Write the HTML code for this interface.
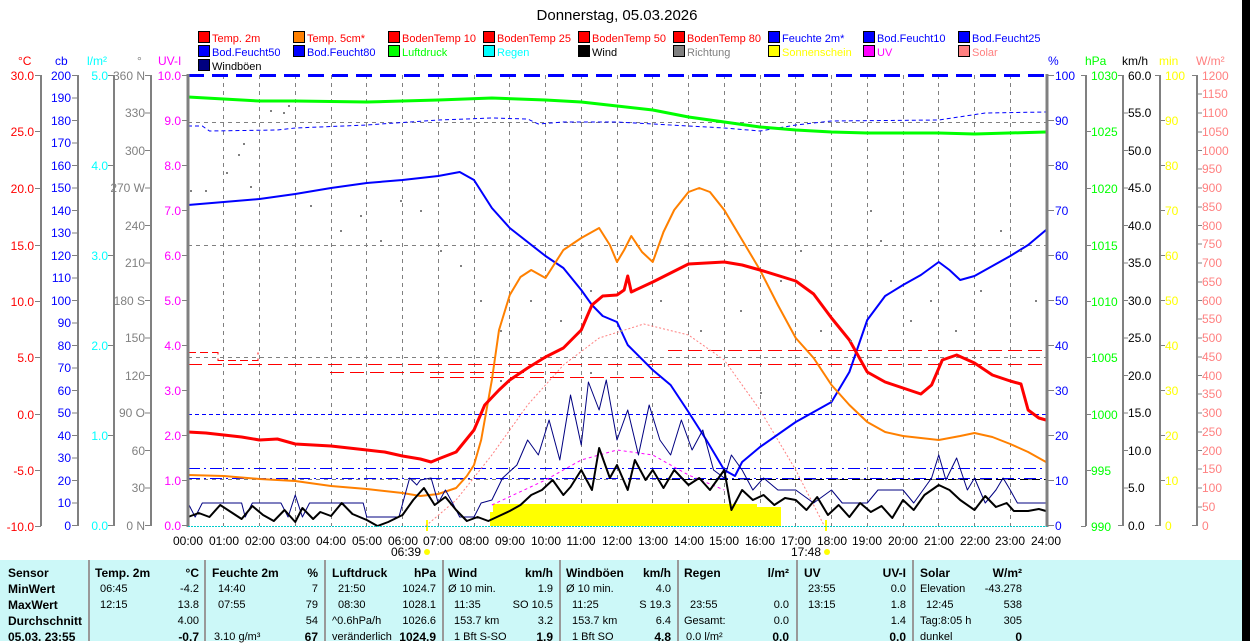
<!DOCTYPE html>
<html><head><meta charset="utf-8">
<style>
html,body{margin:0;padding:0;background:#fff;}
body{width:1250px;height:641px;position:relative;overflow:hidden;font-family:"Liberation Sans",sans-serif;}
svg{position:absolute;left:0;top:0;}
svg text{font-family:"Liberation Sans",sans-serif;font-size:12px;}
svg .lg text{font-size:11px;}
.tb{position:absolute;left:0;top:560px;width:1242px;height:81px;background:#ccf8f8;}
.c{position:absolute;font-size:11px;white-space:nowrap;color:#000;}
.b{font-weight:bold;font-size:12px;}
.r{text-align:right;}
.sep{position:absolute;top:560px;width:2px;height:81px;background:#999;}
</style></head><body>
<div style="position:absolute;left:1242px;top:0;width:8px;height:641px;background:#000"></div>
<svg width="1250" height="641" viewBox="0 0 1250 641">
<text x="617" y="20" text-anchor="middle" style="font-size:15px">Donnerstag, 05.03.2026</text>
<!-- legend -->
<g stroke="#000" stroke-width="1">
<rect x="198.5" y="31.5" width="11" height="11" fill="#f00"/><rect x="293.5" y="31.5" width="11" height="11" fill="#ff8000"/><rect x="388.5" y="31.5" width="11" height="11" fill="#f00"/><rect x="483.5" y="31.5" width="11" height="11" fill="#f00"/><rect x="578.5" y="31.5" width="11" height="11" fill="#f00"/><rect x="673.5" y="31.5" width="11" height="11" fill="#f00"/><rect x="768.5" y="31.5" width="11" height="11" fill="#00f"/><rect x="863.5" y="31.5" width="11" height="11" fill="#00f"/><rect x="958.5" y="31.5" width="11" height="11" fill="#00f"/>
<rect x="198.5" y="45.5" width="11" height="11" fill="#00f"/><rect x="293.5" y="45.5" width="11" height="11" fill="#00f"/><rect x="388.5" y="45.5" width="11" height="11" fill="#0f0"/><rect x="483.5" y="45.5" width="11" height="11" fill="#0ff"/><rect x="578.5" y="45.5" width="11" height="11" fill="#000"/><rect x="673.5" y="45.5" width="11" height="11" fill="#808080"/><rect x="768.5" y="45.5" width="11" height="11" fill="#ff0"/><rect x="863.5" y="45.5" width="11" height="11" fill="#f0f"/><rect x="958.5" y="45.5" width="11" height="11" fill="#ff8080"/>
<rect x="198.5" y="59.5" width="11" height="11" fill="#000080"/>
</g>
<g class="lg">
<text x="212" y="42" fill="#f00">Temp. 2m</text><text x="307" y="42" fill="#f00">Temp. 5cm*</text><text x="402" y="42" fill="#f00">BodenTemp 10</text><text x="497" y="42" fill="#f00">BodenTemp 25</text><text x="592" y="42" fill="#f00">BodenTemp 50</text><text x="687" y="42" fill="#f00">BodenTemp 80</text><text x="782" y="42" fill="#00f">Feuchte 2m*</text><text x="877" y="42" fill="#00f">Bod.Feucht10</text><text x="972" y="42" fill="#00f">Bod.Feucht25</text>
<text x="212" y="56" fill="#00f">Bod.Feucht50</text><text x="307" y="56" fill="#00f">Bod.Feucht80</text><text x="402" y="56" fill="#0f0">Luftdruck</text><text x="497" y="56" fill="#0ff">Regen</text><text x="592" y="56" fill="#000">Wind</text><text x="687" y="56" fill="#808080">Richtung</text><text x="782" y="56" fill="#ff0">Sonnenschein</text><text x="877" y="56" fill="#f0f">UV</text><text x="972" y="56" fill="#ff8080">Solar</text>
<text x="212" y="70" fill="#000">Windböen</text>
</g>
<!-- axis titles -->
<text x="18" y="65" fill="#f00">°C</text><text x="55" y="65" fill="#00f">cb</text><text x="87" y="65" fill="#0ff">l/m²</text><text x="137" y="65" fill="#808080">°</text><text x="158" y="65" fill="#f0f">UV-I</text>
<text x="1048" y="65" fill="#00f">%</text><text x="1085" y="65" fill="#0f0">hPa</text><text x="1122" y="65" fill="#000">km/h</text><text x="1159" y="65" fill="#ff0">min</text><text x="1196" y="65" fill="#ff8080">W/m²</text>
<!-- left axis lines -->
<g stroke="#808080" stroke-width="2">
<line x1="41" y1="75" x2="41" y2="526"/><line x1="78" y1="75" x2="78" y2="526"/><line x1="114" y1="75" x2="114" y2="526"/><line x1="151" y1="75" x2="151" y2="526"/>
<line x1="1086" y1="75" x2="1086" y2="526"/><line x1="1123" y1="75" x2="1123" y2="526"/><line x1="1160" y1="75" x2="1160" y2="526"/><line x1="1197" y1="75" x2="1197" y2="526"/>
</g>
<g stroke="#808080" stroke-width="1">
<path d="M35 75.5h6M35 131.5h6M35 188.5h6M35 245.5h6M35 301.5h6M35 357.5h6M35 414.5h6M35 470.5h6M35 526.5h6"/>
<path d="M72 75.5h6M72 98h6M72 120.5h6M72 143h6M72 165.5h6M72 188h6M72 210.5h6M72 233h6M72 255.5h6M72 278h6M72 300.5h6M72 323h6M72 345.5h6M72 368h6M72 390.5h6M72 413h6M72 435.5h6M72 458h6M72 480.5h6M72 503h6M72 525.5h6"/>
<path d="M108 75.5h6M108 165.5h6M108 255.5h6M108 345.5h6M108 435.5h6M108 525.5h6"/>
<path d="M145 75.5h6M145 113h6M145 150.5h6M145 188h6M145 225.5h6M145 263h6M145 300.5h6M145 338h6M145 375.5h6M145 413h6M145 450.5h6M145 488h6M145 525.5h6"/>
<path d="M182 75.5h6M182 120.5h6M182 165.5h6M182 210.5h6M182 255.5h6M182 300.5h6M182 345.5h6M182 390.5h6M182 435.5h6M182 480.5h6M182 525.5h6"/>
<path d="M1048 75.5h6M1048 120.5h6M1048 165.5h6M1048 210.5h6M1048 255.5h6M1048 300.5h6M1048 345.5h6M1048 390.5h6M1048 435.5h6M1048 480.5h6M1048 525.5h6"/>
<path d="M1081 75.5h5M1086 131.5h5M1086 188.5h5M1086 245.5h5M1086 301.5h5M1086 357.5h5M1086 414.5h5M1086 470.5h5M1081 526.5h5"/>
<path d="M1118 75.5h5M1123 113h5M1123 150.5h5M1123 188h5M1123 225.5h5M1123 263h5M1123 300.5h5M1123 338h5M1123 375.5h5M1123 413h5M1123 450.5h5M1123 488h5M1118 525.5h5"/>
<path d="M1155 75.5h5M1160 120.5h5M1160 165.5h5M1160 210.5h5M1160 255.5h5M1160 300.5h5M1160 345.5h5M1160 390.5h5M1160 435.5h5M1160 480.5h5M1155 525.5h5"/>
<path d="M1192 75.5h5M1197 94h5M1197 113h5M1197 132h5M1197 150.5h5M1197 169h5M1197 188h5M1197 207h5M1197 225.5h5M1197 244h5M1197 263h5M1197 282h5M1197 300.5h5M1197 319h5M1197 338h5M1197 357h5M1197 375.5h5M1197 394h5M1197 413h5M1197 432h5M1197 450.5h5M1197 469h5M1197 488h5M1197 507h5M1192 525.5h5"/>
</g>
<!-- left labels -->
<g fill="#f00" text-anchor="end"><text x="34" y="80">30.0</text><text x="34" y="136">25.0</text><text x="34" y="193">20.0</text><text x="34" y="250">15.0</text><text x="34" y="306">10.0</text><text x="34" y="362">5.0</text><text x="34" y="419">0.0</text><text x="34" y="475">-5.0</text><text x="34" y="531">-10.0</text></g>
<g fill="#00f" text-anchor="end"><text x="71" y="80">200</text><text x="71" y="102">190</text><text x="71" y="125">180</text><text x="71" y="147">170</text><text x="71" y="170">160</text><text x="71" y="192">150</text><text x="71" y="215">140</text><text x="71" y="237">130</text><text x="71" y="260">120</text><text x="71" y="282">110</text><text x="71" y="305">100</text><text x="71" y="327">90</text><text x="71" y="350">80</text><text x="71" y="372">70</text><text x="71" y="395">60</text><text x="71" y="417">50</text><text x="71" y="440">40</text><text x="71" y="462">30</text><text x="71" y="485">20</text><text x="71" y="507">10</text><text x="71" y="530">0</text></g>
<g fill="#0ff" text-anchor="end"><text x="108" y="80">5.0</text><text x="108" y="170">4.0</text><text x="108" y="260">3.0</text><text x="108" y="350">2.0</text><text x="108" y="440">1.0</text><text x="108" y="530">0.0</text></g>
<g fill="#808080" text-anchor="end"><text x="145" y="80">360 N</text><text x="145" y="117">330</text><text x="145" y="155">300</text><text x="145" y="192">270 W</text><text x="145" y="230">240</text><text x="145" y="267">210</text><text x="145" y="305">180 S</text><text x="145" y="342">150</text><text x="145" y="380">120</text><text x="145" y="417">90 O</text><text x="145" y="455">60</text><text x="145" y="492">30</text><text x="145" y="530">0 N</text></g>
<g fill="#f0f" text-anchor="end"><text x="181" y="80">10.0</text><text x="181" y="125">9.0</text><text x="181" y="170">8.0</text><text x="181" y="215">7.0</text><text x="181" y="260">6.0</text><text x="181" y="305">5.0</text><text x="181" y="350">4.0</text><text x="181" y="395">3.0</text><text x="181" y="440">2.0</text><text x="181" y="485">1.0</text><text x="181" y="530">0.0</text></g>
<!-- right labels -->
<g fill="#00f"><text x="1055" y="80">100</text><text x="1055" y="125">90</text><text x="1055" y="170">80</text><text x="1055" y="215">70</text><text x="1055" y="260">60</text><text x="1055" y="305">50</text><text x="1055" y="350">40</text><text x="1055" y="395">30</text><text x="1055" y="440">20</text><text x="1055" y="485">10</text><text x="1055" y="530">0</text></g>
<g fill="#0f0"><text x="1091" y="80">1030</text><text x="1091" y="136">1025</text><text x="1091" y="193">1020</text><text x="1091" y="250">1015</text><text x="1091" y="306">1010</text><text x="1091" y="362">1005</text><text x="1091" y="419">1000</text><text x="1091" y="475">995</text><text x="1091" y="531">990</text></g>
<g fill="#000"><text x="1128" y="80">60.0</text><text x="1128" y="117">55.0</text><text x="1128" y="155">50.0</text><text x="1128" y="192">45.0</text><text x="1128" y="230">40.0</text><text x="1128" y="267">35.0</text><text x="1128" y="305">30.0</text><text x="1128" y="342">25.0</text><text x="1128" y="380">20.0</text><text x="1128" y="417">15.0</text><text x="1128" y="455">10.0</text><text x="1128" y="492">5.0</text><text x="1128" y="530">0.0</text></g>
<g fill="#ff0"><text x="1165" y="80">100</text><text x="1165" y="125">90</text><text x="1165" y="170">80</text><text x="1165" y="215">70</text><text x="1165" y="260">60</text><text x="1165" y="305">50</text><text x="1165" y="350">40</text><text x="1165" y="395">30</text><text x="1165" y="440">20</text><text x="1165" y="485">10</text><text x="1165" y="530">0</text></g>
<g fill="#ff8080"><text x="1202" y="80">1200</text><text x="1202" y="98">1150</text><text x="1202" y="117">1100</text><text x="1202" y="136">1050</text><text x="1202" y="155">1000</text><text x="1202" y="173">950</text><text x="1202" y="192">900</text><text x="1202" y="211">850</text><text x="1202" y="230">800</text><text x="1202" y="248">750</text><text x="1202" y="267">700</text><text x="1202" y="286">650</text><text x="1202" y="305">600</text><text x="1202" y="323">550</text><text x="1202" y="342">500</text><text x="1202" y="361">450</text><text x="1202" y="380">400</text><text x="1202" y="398">350</text><text x="1202" y="417">300</text><text x="1202" y="436">250</text><text x="1202" y="455">200</text><text x="1202" y="473">150</text><text x="1202" y="492">100</text><text x="1202" y="511">50</text><text x="1202" y="530">0</text></g>
<!-- grid -->
<g stroke="#808080" stroke-width="1" stroke-dasharray="4,4">
<path d="M223.5 75v451M259.5 75v451M295.5 75v451M331.5 75v451M366.5 75v451M402.5 75v451M438.5 75v451M474.5 75v451M509.5 75v451M545.5 75v451M581.5 75v451M617.5 75v451M652.5 75v451M688.5 75v451M724.5 75v451M760.5 75v451M795.5 75v451M831.5 75v451M867.5 75v451M903.5 75v451M938.5 75v451M974.5 75v451M1010.5 75v451"/>
<path d="M188 122.5h858M188 245.5h858M188 357.5h858M188 479.5h858"/>
</g>
<!-- x labels -->
<g fill="#000" text-anchor="middle">
<text x="188" y="545">00:00</text><text x="224" y="545">01:00</text><text x="260" y="545">02:00</text><text x="295" y="545">03:00</text><text x="331" y="545">04:00</text><text x="367" y="545">05:00</text><text x="403" y="545">06:00</text><text x="438" y="545">07:00</text><text x="474" y="545">08:00</text><text x="510" y="545">09:00</text><text x="546" y="545">10:00</text><text x="581" y="545">11:00</text><text x="617" y="545">12:00</text><text x="653" y="545">13:00</text><text x="689" y="545">14:00</text><text x="724" y="545">15:00</text><text x="760" y="545">16:00</text><text x="796" y="545">17:00</text><text x="832" y="545">18:00</text><text x="867" y="545">19:00</text><text x="903" y="545">20:00</text><text x="939" y="545">21:00</text><text x="975" y="545">22:00</text><text x="1010" y="545">23:00</text><text x="1046" y="545">24:00</text>
<text x="406" y="556">06:39</text><text x="806" y="556">17:48</text>
</g>
<circle cx="427" cy="552" r="3" fill="#ff0"/><circle cx="827" cy="552" r="3" fill="#ff0"/>
<line x1="427" y1="520" x2="427" y2="531" stroke="#ff0" stroke-width="2"/><line x1="826" y1="520" x2="826" y2="531" stroke="#ff0" stroke-width="2"/>
<!-- sunshine -->
<rect x="493" y="504" width="264" height="22" fill="#ff0"/><rect x="757" y="507" width="24" height="19" fill="#ff0"/><rect x="490" y="512" width="4" height="14" fill="#ff0"/>
<!-- dashed reference lines -->
<g fill="none" stroke-width="1">
<path d="M188 75.5h858" stroke="#00f" stroke-width="3" stroke-dasharray="16,8"/>
<path d="M188 414.5h858" stroke="#00f" stroke-dasharray="4,3"/>
<path d="M188 468.5h858" stroke="#00f" stroke-dasharray="12,4,2,4"/>
<path d="M188 478.5h858" stroke="#00f" stroke-dasharray="12,4,2,4"/>
<path d="M188 364.5h858" stroke="#f00" stroke-dasharray="14,6"/>
<path d="M188 352.5h30v8h40v-8" stroke="#f00" stroke-dasharray="8,4"/>
<path d="M430 377.5h230" stroke="#f00" stroke-dasharray="14,6"/>
<path d="M668 350.5h378" stroke="#f00" stroke-dasharray="14,6"/>
<path d="M330 372.5h240" stroke="#f00" stroke-dasharray="14,6"/>
<path d="M660 479.5h386" stroke="#000" stroke-dasharray="8,4"/>
</g>
<!-- curves in hour units -->
<g transform="translate(188,0) scale(35.75,1)" fill="none" stroke-linejoin="round">
<polyline vector-effect="non-scaling-stroke" stroke="#ff8080" stroke-width="1" stroke-dasharray="2,2" points="6.65,526 7.5,500 8.5,455 9.5,405 10.5,365 11.5,338 12.75,324 14,335 15,360 16,410 17,470 17.8,526"/>
<polyline vector-effect="non-scaling-stroke" stroke="#f0f" stroke-width="1" stroke-dasharray="3,3" points="8.5,505 10,480 11,460 12,450 13,455 14,475 15,490"/>
<polyline vector-effect="non-scaling-stroke" stroke="#00f" stroke-width="1" stroke-dasharray="4,3" points="0,126 0.4,126 0.6,131 2.5,130 3,128 5,125 7,120 8.5,118 9.5,119 9.8,124 10.5,122 12,122 14,126 15,128 16,131 17,125 18,121 21,120 22.3,113 24,112"/>
<polyline vector-effect="non-scaling-stroke" stroke="#0f0" stroke-width="3" points="0,97 1,99 2,101 3,101 5,102 6,101 7,100 8.5,98 10,100 11,102 12,106 13,110 14,117 15,122 16,127 17,130 18,132 19,133 21,133 22,134 24,132"/>
<polyline vector-effect="non-scaling-stroke" stroke="#00f" stroke-width="2" points="0,205 1,202 2,199 3,194 4,188 5,183 6,180 7,176 7.6,172 8,180 8.5,208 9,228 10,256 10.5,268 11,290 11.3,305 11.6,316 12,322 12.3,345 13,370 13.5,385 14,412 14.5,440 15,470 15.3,476 15.5,462 16,447 17,422 18,402 18.5,372 19,320 19.5,296 20,285 20.5,275 21,262 21.3,270 21.6,280 22,276 23,256 23.5,245 24,230"/>
<polyline vector-effect="non-scaling-stroke" stroke="#ff8000" stroke-width="2" points="0,475 1,476 2,479 3,481 4,486 5,489 6,493 6.5,496 7,494 7.5,488 7.8,476 8,465 8.2,440 8.5,380 8.7,330 9,295 9.3,277 9.6,270 10,278 10.5,250 11,238 11.5,228 11.8,245 12,262 12.2,250 12.4,236 12.7,252 13,262 13.3,232 13.6,210 14,192 14.3,188 14.6,192 15,210 15.5,240 16,270 16.5,305 17,338 17.5,358 18,385 18.5,405 19,422 19.5,432 20,436 21,440 21.6,436 22,433 22.5,437 23,444 23.5,452 24,462"/>
<polyline vector-effect="non-scaling-stroke" stroke="#f00" stroke-width="3" points="0,432 0.5,433 1,435 1.5,437 2,440 2.5,439 3,444 3.5,445 4,446 4.5,448 5,450 5.5,452 6,456 6.5,459 6.8,462 7,459 7.5,452 8,430 8.3,405 8.7,390 9,380 9.5,368 10,357 10.5,348 11,330 11.3,305 11.6,296 12,295 12.2,290 12.3,276 12.4,292 13,282 13.5,273 14,264 15,262 15.5,265 16,270 17,281 17.5,294 18,318 18.5,340 19,372 19.5,382 20,388 20.5,394 20.8,385 21.1,360 21.5,355 22,363 22.5,375 23,381 23.3,384 23.5,410 23.8,418 24,420"/>
<polyline vector-effect="non-scaling-stroke" stroke="#000080" stroke-width="1" points="0,503 0.2,517 0.4,503 1.5,503 1.6,517 1.8,503 2.6,503 2.8,517 3.0,495 3.2,517 3.4,503 4.9,503 5.0,517 5.9,517 6.2,478 6.4,485 6.5,480 6.8,478 7,503 7.2,490 7.4,503 7.6,517 8,517 8.2,503 8.5,500 8.8,478 9.2,465 9.5,440 9.8,455 10.1,420 10.4,460 10.7,395 11.0,445 11.2,382 11.5,410 11.7,380 12.0,440 12.3,410 12.6,455 12.9,405 13.2,440 13.5,455 13.8,420 14.1,450 14.4,430 14.7,470 15,478 15.2,455 15.5,470 15.8,490 16.1,478 16.5,490 17,490 17.5,503 18,490 18.3,503 19,503 19.3,490 20,490 20.3,503 20.8,478 21.0,455 21.2,480 21.5,458 21.8,490 22.0,478 22.3,503 22.6,490 22.8,478 23.0,490 23.2,503 24,503 24,480"/>
<polyline vector-effect="non-scaling-stroke" stroke="#000" stroke-width="2" points="0,517 0.3,513 0.6,517 0.9,505 1.2,512 1.5,519 1.8,506 2.1,515 2.4,521 2.7,510 3.0,522 3.2,508 3.5,519 3.7,512 4.0,516 4.3,503 4.6,514 5.0,520 5.3,526 5.6,522 6.0,515 6.3,500 6.6,488 6.9,505 7.2,497 7.5,510 7.8,521 8.1,517 8.4,521 8.7,516 9.0,511 9.3,505 9.6,495 9.9,490 10.2,480 10.5,495 10.7,487 11.0,470 11.3,490 11.5,448 11.8,478 12.0,465 12.3,490 12.5,460 12.8,480 13.0,470 13.3,488 13.6,470 14.0,485 14.3,478 14.6,490 15.0,470 15.2,510 15.5,490 15.8,500 16.1,495 16.4,505 16.7,498 17.0,500 17.3,510 17.6,497 17.9,515 18.2,505 18.5,517 18.8,503 19.1,512 19.4,506 19.7,518 20.0,500 20.3,510 20.6,495 21.0,485 21.3,490 21.6,500 22.0,510 22.3,496 22.6,507 22.9,503 23.1,511 23.5,511 23.8,509 24,511"/>
</g>
<g fill="#808080">
<rect x="243" y="143" width="2" height="2"/><rect x="238" y="154" width="2" height="2"/><rect x="226" y="172" width="2" height="2"/><rect x="250" y="186" width="2" height="2"/><rect x="270" y="110" width="2" height="2"/><rect x="283" y="112" width="2" height="2"/><rect x="288" y="105" width="2" height="2"/><rect x="190" y="190" width="2" height="2"/><rect x="205" y="190" width="2" height="2"/><rect x="310" y="205" width="2" height="2"/><rect x="340" y="230" width="2" height="2"/><rect x="360" y="215" width="2" height="2"/><rect x="380" y="240" width="2" height="2"/><rect x="400" y="200" width="2" height="2"/><rect x="420" y="210" width="2" height="2"/><rect x="440" y="250" width="2" height="2"/><rect x="460" y="265" width="2" height="2"/><rect x="480" y="300" width="2" height="2"/><rect x="500" y="330" width="2" height="2"/><rect x="530" y="300" width="2" height="2"/><rect x="560" y="320" width="2" height="2"/><rect x="590" y="290" width="2" height="2"/><rect x="620" y="330" width="2" height="2"/><rect x="660" y="300" width="2" height="2"/><rect x="700" y="330" width="2" height="2"/><rect x="740" y="310" width="2" height="2"/><rect x="780" y="280" width="2" height="2"/><rect x="800" y="250" width="2" height="2"/><rect x="820" y="330" width="2" height="2"/><rect x="850" y="340" width="2" height="2"/><rect x="870" y="210" width="2" height="2"/><rect x="880" y="240" width="2" height="2"/><rect x="890" y="280" width="2" height="2"/><rect x="910" y="320" width="2" height="2"/><rect x="930" y="300" width="2" height="2"/><rect x="955" y="330" width="2" height="2"/><rect x="980" y="290" width="2" height="2"/><rect x="1000" y="230" width="2" height="2"/><rect x="1020" y="250" width="2" height="2"/><rect x="1035" y="300" width="2" height="2"/><rect x="590" y="372" width="2" height="2"/><rect x="650" y="360" width="2" height="2"/><rect x="760" y="392" width="2" height="2"/><rect x="830" y="400" width="2" height="2"/><rect x="500" y="380" width="2" height="2"/>
</g>
<line x1="188" y1="74" x2="188" y2="527" stroke="#808080" stroke-width="3"/>
<line x1="1047" y1="74" x2="1047" y2="527" stroke="#808080" stroke-width="3"/>
<line x1="188" y1="526.5" x2="1047" y2="526.5" stroke="#0cc" stroke-width="1" stroke-dasharray="2,1"/>
</svg>
<div class="tb"></div>
<div class="sep" style="left:88px"></div><div class="sep" style="left:204px"></div><div class="sep" style="left:324px"></div><div class="sep" style="left:442px"></div><div class="sep" style="left:559px"></div><div class="sep" style="left:677px"></div><div class="sep" style="left:796px"></div><div class="sep" style="left:912px"></div>
<div class="c b" style="left:8px;top:566px">Sensor</div><div class="c b" style="left:8px;top:582px">MinWert</div><div class="c b" style="left:8px;top:598px">MaxWert</div><div class="c b" style="left:8px;top:614px">Durchschnitt</div><div class="c b" style="left:8px;top:630px">05.03. 23:55</div>

<div class="c b" style="left:95px;top:566px">Temp. 2m</div><div class="c b r" style="left:140px;width:59px;top:566px">°C</div>
<div class="c" style="left:100px;top:583px">06:45</div><div class="c r" style="left:140px;width:59px;top:583px">-4.2</div>
<div class="c" style="left:100px;top:599px">12:15</div><div class="c r" style="left:140px;width:59px;top:599px">13.8</div>
<div class="c r" style="left:140px;width:59px;top:615px">4.00</div><div class="c b r" style="left:140px;width:59px;top:630px">-0.7</div>

<div class="c b" style="left:212px;top:566px">Feuchte 2m</div><div class="c b r" style="left:260px;width:58px;top:566px">%</div>
<div class="c" style="left:218px;top:583px">14:40</div><div class="c r" style="left:260px;width:58px;top:583px">7</div>
<div class="c" style="left:218px;top:599px">07:55</div><div class="c r" style="left:260px;width:58px;top:599px">79</div>
<div class="c r" style="left:260px;width:58px;top:615px">54</div>
<div class="c" style="left:214px;top:631px">3.10 g/m³</div><div class="c b r" style="left:260px;width:58px;top:630px">67</div>

<div class="c b" style="left:332px;top:566px">Luftdruck</div><div class="c b r" style="left:380px;width:56px;top:566px">hPa</div>
<div class="c" style="left:338px;top:583px">21:50</div><div class="c r" style="left:380px;width:56px;top:583px">1024.7</div>
<div class="c" style="left:338px;top:599px">08:30</div><div class="c r" style="left:380px;width:56px;top:599px">1028.1</div>
<div class="c" style="left:332px;top:615px">^0.6hPa/h</div><div class="c r" style="left:380px;width:56px;top:615px">1026.6</div>
<div class="c" style="left:332px;top:631px">veränderlich</div><div class="c b r" style="left:380px;width:56px;top:630px">1024.9</div>

<div class="c b" style="left:448px;top:566px">Wind</div><div class="c b r" style="left:500px;width:53px;top:566px">km/h</div>
<div class="c" style="left:448px;top:583px">Ø 10 min.</div><div class="c r" style="left:500px;width:53px;top:583px">1.9</div>
<div class="c" style="left:454px;top:599px">11:35</div><div class="c r" style="left:500px;width:53px;top:599px">SO 10.5</div>
<div class="c" style="left:454px;top:615px">153.7 km</div><div class="c r" style="left:500px;width:53px;top:615px">3.2</div>
<div class="c" style="left:454px;top:631px">1 Bft S-SO</div><div class="c b r" style="left:500px;width:53px;top:630px">1.9</div>

<div class="c b" style="left:566px;top:566px">Windböen</div><div class="c b r" style="left:620px;width:51px;top:566px">km/h</div>
<div class="c" style="left:566px;top:583px">Ø 10 min.</div><div class="c r" style="left:620px;width:51px;top:583px">4.0</div>
<div class="c" style="left:572px;top:599px">11:25</div><div class="c r" style="left:620px;width:51px;top:599px">S 19.3</div>
<div class="c" style="left:572px;top:615px">153.7 km</div><div class="c r" style="left:620px;width:51px;top:615px">6.4</div>
<div class="c" style="left:572px;top:631px">1 Bft SO</div><div class="c b r" style="left:620px;width:51px;top:630px">4.8</div>

<div class="c b" style="left:684px;top:566px">Regen</div><div class="c b r" style="left:740px;width:49px;top:566px">l/m²</div>
<div class="c" style="left:690px;top:599px">23:55</div><div class="c r" style="left:740px;width:49px;top:599px">0.0</div>
<div class="c" style="left:684px;top:615px">Gesamt:</div><div class="c r" style="left:740px;width:49px;top:615px">0.0</div>
<div class="c" style="left:686px;top:631px">0.0 l/m²</div><div class="c b r" style="left:740px;width:49px;top:630px">0.0</div>

<div class="c b" style="left:804px;top:566px">UV</div><div class="c b r" style="left:860px;width:46px;top:566px">UV-I</div>
<div class="c" style="left:808px;top:583px">23:55</div><div class="c r" style="left:860px;width:46px;top:583px">0.0</div>
<div class="c" style="left:808px;top:599px">13:15</div><div class="c r" style="left:860px;width:46px;top:599px">1.8</div>
<div class="c r" style="left:860px;width:46px;top:615px">1.4</div><div class="c b r" style="left:860px;width:46px;top:630px">0.0</div>

<div class="c b" style="left:920px;top:566px">Solar</div><div class="c b r" style="left:970px;width:52px;top:566px">W/m²</div>
<div class="c" style="left:920px;top:583px">Elevation</div><div class="c r" style="left:970px;width:52px;top:583px">-43.278</div>
<div class="c" style="left:926px;top:599px">12:45</div><div class="c r" style="left:970px;width:52px;top:599px">538</div>
<div class="c" style="left:920px;top:615px">Tag:8:05 h</div><div class="c r" style="left:970px;width:52px;top:615px">305</div>
<div class="c" style="left:920px;top:631px">dunkel</div><div class="c b r" style="left:970px;width:52px;top:630px">0</div>
</body></html>
